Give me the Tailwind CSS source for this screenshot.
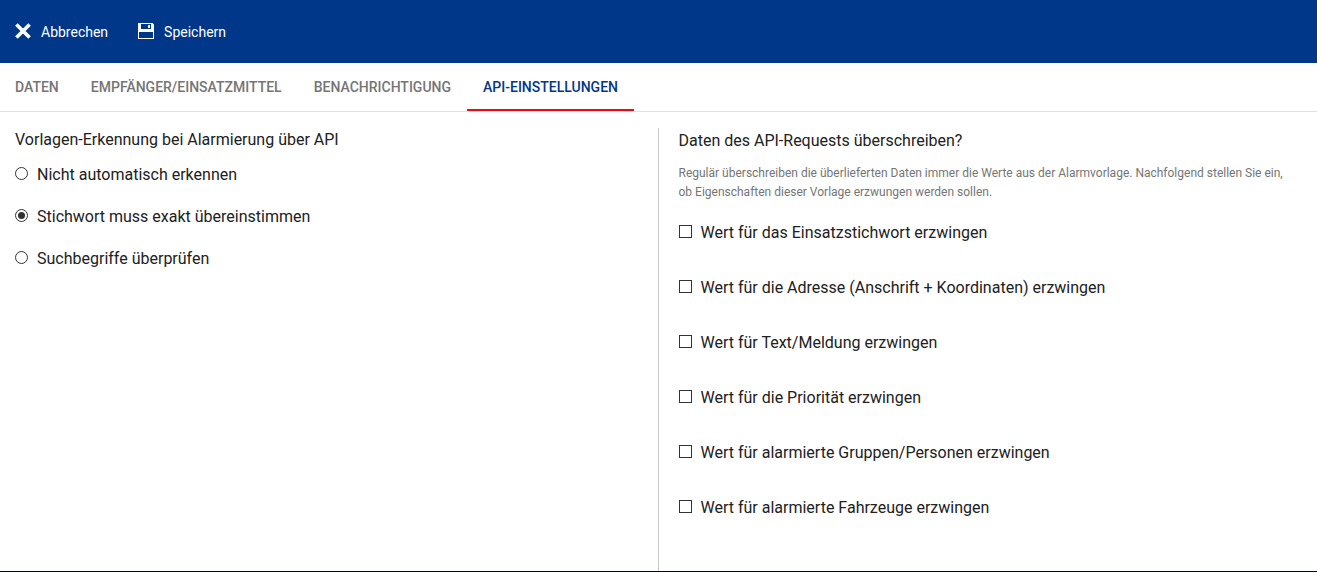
<!DOCTYPE html>
<html lang="de">
<head>
    <meta charset="UTF-8">
    <meta name="viewport" content="width=device-width, initial-scale=1.0">
    <title>API-Einstellungen</title>
    <script src="https://cdn.jsdelivr.net/npm/@tailwindcss/browser@4"></script>
</head>
<body class="flex min-h-screen flex-col border-b border-[#000814] bg-white font-[Roboto,sans-serif] text-base text-[#212121]">

    <!-- Toolbar -->
    <header class="flex h-[63px] items-center gap-[30px] bg-[#003789] px-[15px] text-sm text-white">
        <button type="button" class="flex items-center gap-[10px]">
            <svg class="mb-[2px] size-4" viewBox="0 0 16 16" fill="none" stroke="currentColor" stroke-width="3.6">
                <path d="M1.4 1.4l13.2 13.2M14.6 1.4L1.4 14.6"/>
            </svg>
            Abbrechen
        </button>
        <button type="button" class="flex items-center gap-[10px]">
            <svg class="mb-[2px] size-4" viewBox="0 0 16 16" fill="currentColor">
                <path fill-rule="evenodd" d="M0 0h14.5L16 1.5V16H0zM3 1v5h10V1zM1 9v6h14V9z"/>
                <path d="M10 2h2v3h-2z"/>
            </svg>
            Speichern
        </button>
    </header>

    <!-- Tabs -->
    <nav class="flex h-[49px] border-b border-[#e0e0e0] text-sm font-medium text-[#757575]">
        <a href="#" class="flex items-center border-b-2 border-transparent pt-[2px] pr-4 pl-[15px]">DATEN</a>
        <a href="#" class="flex items-center border-b-2 border-transparent px-4 pt-[2px]">EMPFÄNGER/EINSATZMITTEL</a>
        <a href="#" class="flex items-center border-b-2 border-transparent px-4 pt-[2px]">BENACHRICHTIGUNG</a>
        <a href="#" class="flex items-center border-b-2 border-[#e20f19] px-4 pt-[2px] text-[#003789]" aria-current="page">API-EINSTELLUNGEN</a>
    </nav>

    <!-- Content -->
    <main class="grid flex-1 grid-cols-2 pt-4">
        <fieldset class="px-[15px]">
            <legend class="float-left w-full leading-6">Vorlagen-Erkennung bei Alarmierung über API</legend>
            <div class="clear-both flex flex-col gap-[18px] pt-[11px]">
                <label class="flex items-center gap-[9px]">
                    <input type="radio" name="erkennung" class="mb-[3px] size-[13px] appearance-none rounded-full border border-[#333] p-[2px] checked:bg-[#333] checked:bg-clip-content">
                    Nicht automatisch erkennen
                </label>
                <label class="flex items-center gap-[9px]">
                    <input type="radio" name="erkennung" checked class="mb-[3px] size-[13px] appearance-none rounded-full border border-[#333] p-[2px] checked:bg-[#333] checked:bg-clip-content">
                    Stichwort muss exakt übereinstimmen
                </label>
                <label class="flex items-center gap-[9px]">
                    <input type="radio" name="erkennung" class="mb-[3px] size-[13px] appearance-none rounded-full border border-[#333] p-[2px] checked:bg-[#333] checked:bg-clip-content">
                    Suchbegriffe überprüfen
                </label>
            </div>
        </fieldset>

        <section class="-ml-px border-l border-[#c8c8c8] pr-6 pl-5">
            <h2 class="leading-[26px]">Daten des API-Requests überschreiben?</h2>
            <p class="mt-[10px] text-xs leading-[19px] text-[#757575]">Regulär überschreiben die überlieferten Daten immer die Werte aus der Alarmvorlage. Nachfolgend stellen Sie ein, ob Eigenschaften dieser Vorlage erzwungen werden sollen.</p>
            <div class="mt-[19px] flex flex-col gap-[31px]">
                <label class="flex items-center gap-[9px]">
                    <input type="checkbox" class="mb-[3px] size-[13px] appearance-none border border-[#333] checked:bg-[#333]">
                    Wert für das Einsatzstichwort erzwingen
                </label>
                <label class="flex items-center gap-[9px]">
                    <input type="checkbox" class="mb-[3px] size-[13px] appearance-none border border-[#333] checked:bg-[#333]">
                    Wert für die Adresse (Anschrift + Koordinaten) erzwingen
                </label>
                <label class="flex items-center gap-[9px]">
                    <input type="checkbox" class="mb-[3px] size-[13px] appearance-none border border-[#333] checked:bg-[#333]">
                    Wert für Text/Meldung erzwingen
                </label>
                <label class="flex items-center gap-[9px]">
                    <input type="checkbox" class="mb-[3px] size-[13px] appearance-none border border-[#333] checked:bg-[#333]">
                    Wert für die Priorität erzwingen
                </label>
                <label class="flex items-center gap-[9px]">
                    <input type="checkbox" class="mb-[3px] size-[13px] appearance-none border border-[#333] checked:bg-[#333]">
                    Wert für alarmierte Gruppen/Personen erzwingen
                </label>
                <label class="flex items-center gap-[9px]">
                    <input type="checkbox" class="mb-[3px] size-[13px] appearance-none border border-[#333] checked:bg-[#333]">
                    Wert für alarmierte Fahrzeuge erzwingen
                </label>
            </div>
        </section>
    </main>

</body>
</html>
